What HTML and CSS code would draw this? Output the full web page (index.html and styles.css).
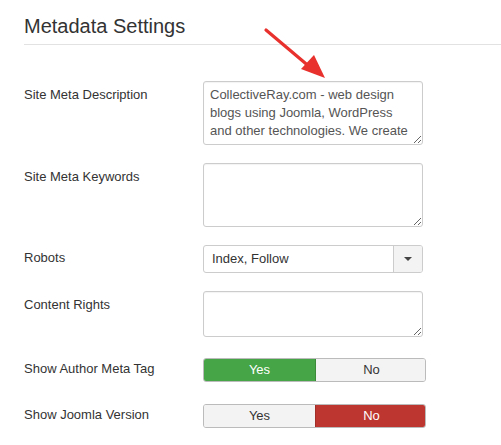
FILE: index.html
```html
<!DOCTYPE html>
<html>
<head>
<meta charset="utf-8">
<link rel="stylesheet" href="styles.css">
</head>
<body>
<div class="page">
  <h2 class="title">Metadata Settings</h2>
  <div class="form">
    <div class="row row-desc">
      <label class="label">Site Meta Description</label>
      <textarea class="area area-tall">CollectiveRay.com - web design
blogs using Joomla, WordPress
and other technologies. We create
quality content and tutorials to help</textarea>
    </div>
    <div class="row row-kw">
      <label class="label">Site Meta Keywords</label>
      <textarea class="area area-tall"></textarea>
    </div>
    <div class="row row-robots">
      <label class="label label-select">Robots</label>
      <div class="select">
        <span class="select-text">Index, Follow</span>
        <span class="select-btn"><span class="caret"></span></span>
      </div>
    </div>
    <div class="row row-rights">
      <label class="label">Content Rights</label>
      <textarea class="area area-short"></textarea>
    </div>
    <div class="row row-author">
      <label class="label label-toggle">Show Author Meta Tag</label>
      <div class="toggle">
        <span class="opt opt-yes on-yes">Yes</span>
        <span class="opt opt-no">No</span>
      </div>
    </div>
    <div class="row row-joomla">
      <label class="label label-toggle">Show Joomla Version</label>
      <div class="toggle toggle-b">
        <span class="opt opt-yes">Yes</span>
        <span class="opt opt-no on-no">No</span>
      </div>
    </div>
  </div>
  <svg class="arrow" width="80" height="70" viewBox="0 0 80 70">
    <line x1="7" y1="5" x2="52" y2="43" stroke="#e8302c" stroke-width="3.2" stroke-linecap="round"/>
    <polygon points="66,53 42,44 55,30" fill="#e8302c"/>
  </svg>
</div>
</body>
</html>
```

FILE: styles.css
```css
html, body {
  margin: 0;
  padding: 0;
  background: #fff;
}
body {
  font-family: "Liberation Sans", Arial, sans-serif;
  color: #333;
  font-size: 13px;
}
.page {
  position: relative;
  width: 501px;
  height: 445px;
  overflow: hidden;
  padding-left: 24px;
  box-sizing: border-box;
}
.title {
  margin: 0;
  padding-top: 14px;
  height: 45px;
  box-sizing: border-box;
  font-size: 20px;
  line-height: 24px;
  font-weight: normal;
  color: #333;
  border-bottom: 1px solid #e2e2e2;
}
.form {
  padding-top: 36px;
}
.row {
  display: grid;
  grid-template-columns: 179px 220px;
  align-items: start;
}
.row-kw { margin-top: 18px; }
.row-robots { margin-top: 18px; }
.row-rights { margin-top: 18px; }
.row-author { margin-top: 21px; }
.row-joomla { margin-top: 22px; }
.label {
  padding-top: 5px;
  line-height: 18px;
  color: #333;
}
.label-select { padding-top: 4px; }
.label-toggle { padding-top: 2px; }
.area {
  display: block;
  width: 220px;
  margin: 0;
  box-sizing: border-box;
  border: 1px solid #ccc;
  border-radius: 3px;
  padding: 3px 6px 4px;
  font-family: "Liberation Sans", Arial, sans-serif;
  font-size: 13px;
  line-height: 18px;
  color: #555;
  background: #fff;
  overflow: hidden;
  white-space: pre;
  resize: both;
  box-shadow: inset 0 1px 1px rgba(0,0,0,0.05);
}
.area-tall { height: 64px; padding-top: 4px; }
.area-short { height: 46px; }
.select {
  display: flex;
  width: 220px;
  height: 28px;
  box-sizing: border-box;
  border: 1px solid #ccc;
  border-radius: 3px;
  background: #fff;
  overflow: hidden;
}
.select-text {
  flex: 1;
  padding-left: 8px;
  line-height: 26px;
  color: #333;
}
.select-btn {
  width: 28px;
  border-left: 1px solid #ccc;
  background: #f3f3f3;
  display: flex;
  align-items: center;
  justify-content: center;
}
.caret {
  width: 0;
  height: 0;
  border-left: 4px solid transparent;
  border-right: 4px solid transparent;
  border-top: 4px solid #444;
}
.toggle {
  display: grid;
  grid-template-columns: 112px 111px;
  width: 223px;
  height: 24px;
  box-sizing: border-box;
  border: 1px solid #bbb;
  border-radius: 3px;
  overflow: hidden;
  background: #f3f3f3;
}
.toggle-b { grid-template-columns: 111px 112px; }
.opt {
  display: block;
  text-align: center;
  line-height: 22px;
  color: #333;
  background: #f3f3f3;
}
.on-yes {
  background: #46a546;
  color: #fff;
  border-right: 1px solid #3a8a3a;
}
.on-no {
  background: #bd362f;
  color: #fff;
  border-left: 1px solid #a02f29;
}
.arrow {
  position: absolute;
  left: 259px;
  top: 25px;
}
```
